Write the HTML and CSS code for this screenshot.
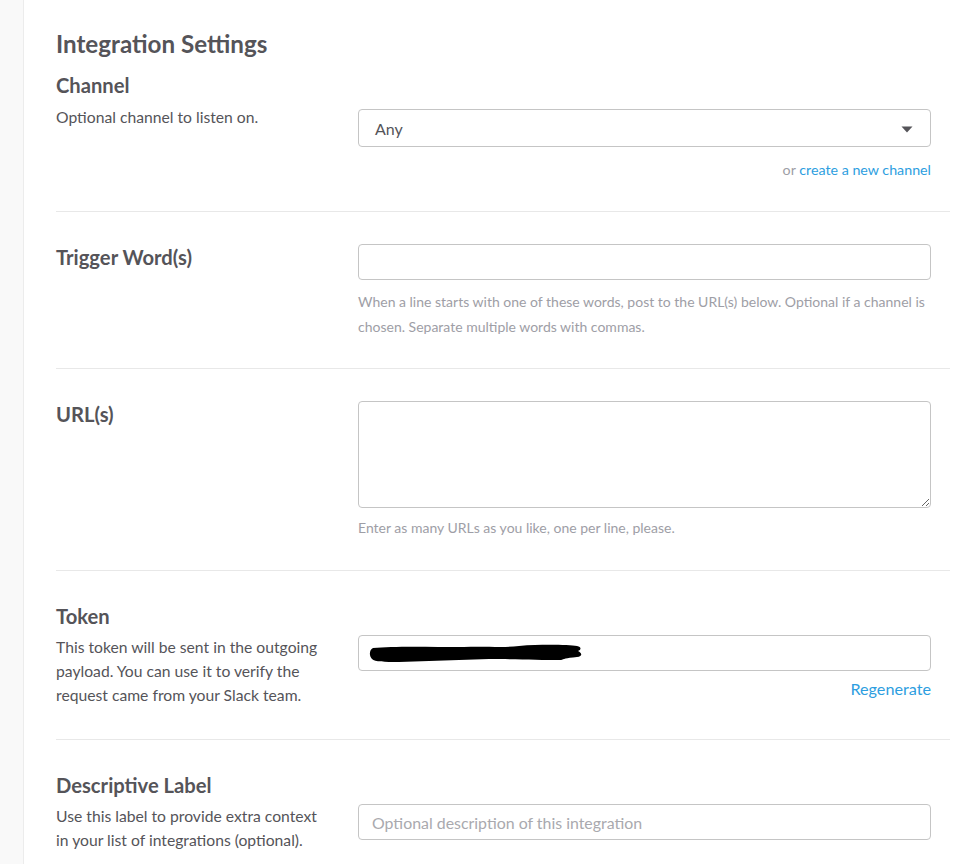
FILE: index.html
```html
<!DOCTYPE html>
<html>
<head>
<meta charset="utf-8">
<link rel="stylesheet" href="styles.css">
</head>
<body>
<div class="page">
  <aside class="gutter"></aside>
  <main class="main">
    <h2 class="title">Integration Settings</h2>

    <section class="section first">
      <h3 class="label">Channel</h3>
      <div class="row">
        <p class="desc">Optional channel to listen on.</p>
        <div class="field">
          <div class="select">
            <span>Any</span>
            <svg class="caret" width="12" height="7" viewBox="0 0 12 7"><path d="M0.5 0.5 H11.5 L6 6.5 Z" fill="#555459"/></svg>
          </div>
          <p class="aside-right">or <a href="#">create a new channel</a></p>
        </div>
      </div>
    </section>

    <section class="section">
      <div class="row">
        <h3 class="label">Trigger Word(s)</h3>
        <div class="field">
          <input class="input" type="text">
          <p class="help">When a line starts with one of these words, post to the URL(s) below. Optional if a channel is chosen. Separate multiple words with commas.</p>
        </div>
      </div>
    </section>

    <section class="section urls">
      <div class="row">
        <h3 class="label">URL(s)</h3>
        <div class="field">
          <textarea class="textarea"></textarea>
          <p class="help">Enter as many URLs as you like, one per line, please.</p>
        </div>
      </div>
    </section>

    <section class="section">
      <h3 class="label">Token</h3>
      <div class="row">
        <p class="desc">This token will be sent in the outgoing payload. You can use it to verify the request came from your Slack team.</p>
        <div class="field">
          <div class="token-wrap">
            <input class="input" type="text">
            <svg class="redact" width="216" height="22" viewBox="0 0 216 22"><path d="M4 6 C25 4 60 5 95 5 C115 4 135 6 150 4 C175 2 200 3 208 4 C213 5 212 8 209 9 C213 11 214 14 208 15 C196 16 195 17 192 18 C170 18 150 17 120 17 C90 18 60 19 30 20 C15 20 6 20 3 17 C0 14 0 8 4 6 Z" fill="#000"/></svg>
          </div>
          <p class="aside-right regen"><a href="#">Regenerate</a></p>
        </div>
      </div>
    </section>

    <section class="section">
      <h3 class="label">Descriptive Label</h3>
      <div class="row">
        <p class="desc">Use this label to provide extra context in your list of integrations (optional).</p>
        <div class="field">
          <input class="input" type="text" placeholder="Optional description of this integration">
        </div>
      </div>
    </section>
  </main>
</div>
</body>
</html>
```

FILE: styles.css
```css
* { box-sizing: border-box; }
html, body { margin: 0; padding: 0; background: #fff; }
body {
  font-family: Lato, "Open Sans", "Liberation Sans", sans-serif;
  color: #555459;
  height: 864px;
  overflow: hidden;
}
.page { display: flex; min-height: 864px; }
.gutter {
  width: 24px;
  flex: 0 0 24px;
  background: #f9f9f9;
  border-right: 1px solid #ececec;
}
.main {
  padding: 29px 0 0 32px;
  width: 926px;
}
.title {
  margin: 0;
  font-size: 24.2px;
  line-height: 30px;
  font-weight: 700;
}
.section {
  border-top: 1px solid #e8e8e8;
  padding: 32px 0 29px;
  width: 894px;
}
.section.first { border-top: 0; padding-top: 13px; padding-bottom: 29px; }
.section.urls { padding-bottom: 30px; }
.label {
  margin: 0;
  font-size: 20.2px;
  line-height: 26px;
  font-weight: 700;
}
.row {
  display: grid;
  grid-template-columns: 302px 573px;
}
.section .label + .row { margin-top: 6px; }
.first .label + .row { margin-top: 7px; }
.desc {
  margin: 0;
  font-size: 15.7px;
  line-height: 24px;
  max-width: 270px;
}
.field { display: flex; flex-direction: column; }
.select {
  margin-top: 4px;
  height: 38px;
  border: 1px solid #c5c5c5;
  border-radius: 4px;
  display: flex;
  align-items: center;
  justify-content: space-between;
  padding: 0 17px 0 16px;
  font-size: 16px;
  color: #555459;
}
.caret { margin-top: 2px; }
.input {
  display: block;
  width: 100%;
  height: 36px;
  border: 1px solid #c5c5c5;
  border-radius: 4px;
  padding: 0 13px;
  font-family: inherit;
  font-size: 15.9px;
  color: #555459;
  outline: none;
  background: #fff;
}
.input::placeholder { color: #a9a9ae; }
.textarea {
  display: block;
  width: 100%;
  height: 107px;
  border: 1px solid #c5c5c5;
  border-radius: 4px;
  font-family: inherit;
  font-size: 15px;
  outline: none;
  resize: vertical;
}
.help {
  margin: 9px 0 0;
  font-size: 14px;
  line-height: 25px;
  color: #9e9ea6;
}
.urls .help { margin-top: 7px; }
.aside-right {
  margin: 10px 0 0;
  text-align: right;
  font-size: 14.25px;
  line-height: 25px;
  color: #9e9ea6;
}
.aside-right a { color: #2d9ee0; text-decoration: none; }
.aside-right.regen { font-size: 16.2px; line-height: 24px; margin-top: 6px; margin-bottom: 9px; }
.token-wrap { position: relative; }
.redact { position: absolute; left: 11px; top: 7px; }
```
